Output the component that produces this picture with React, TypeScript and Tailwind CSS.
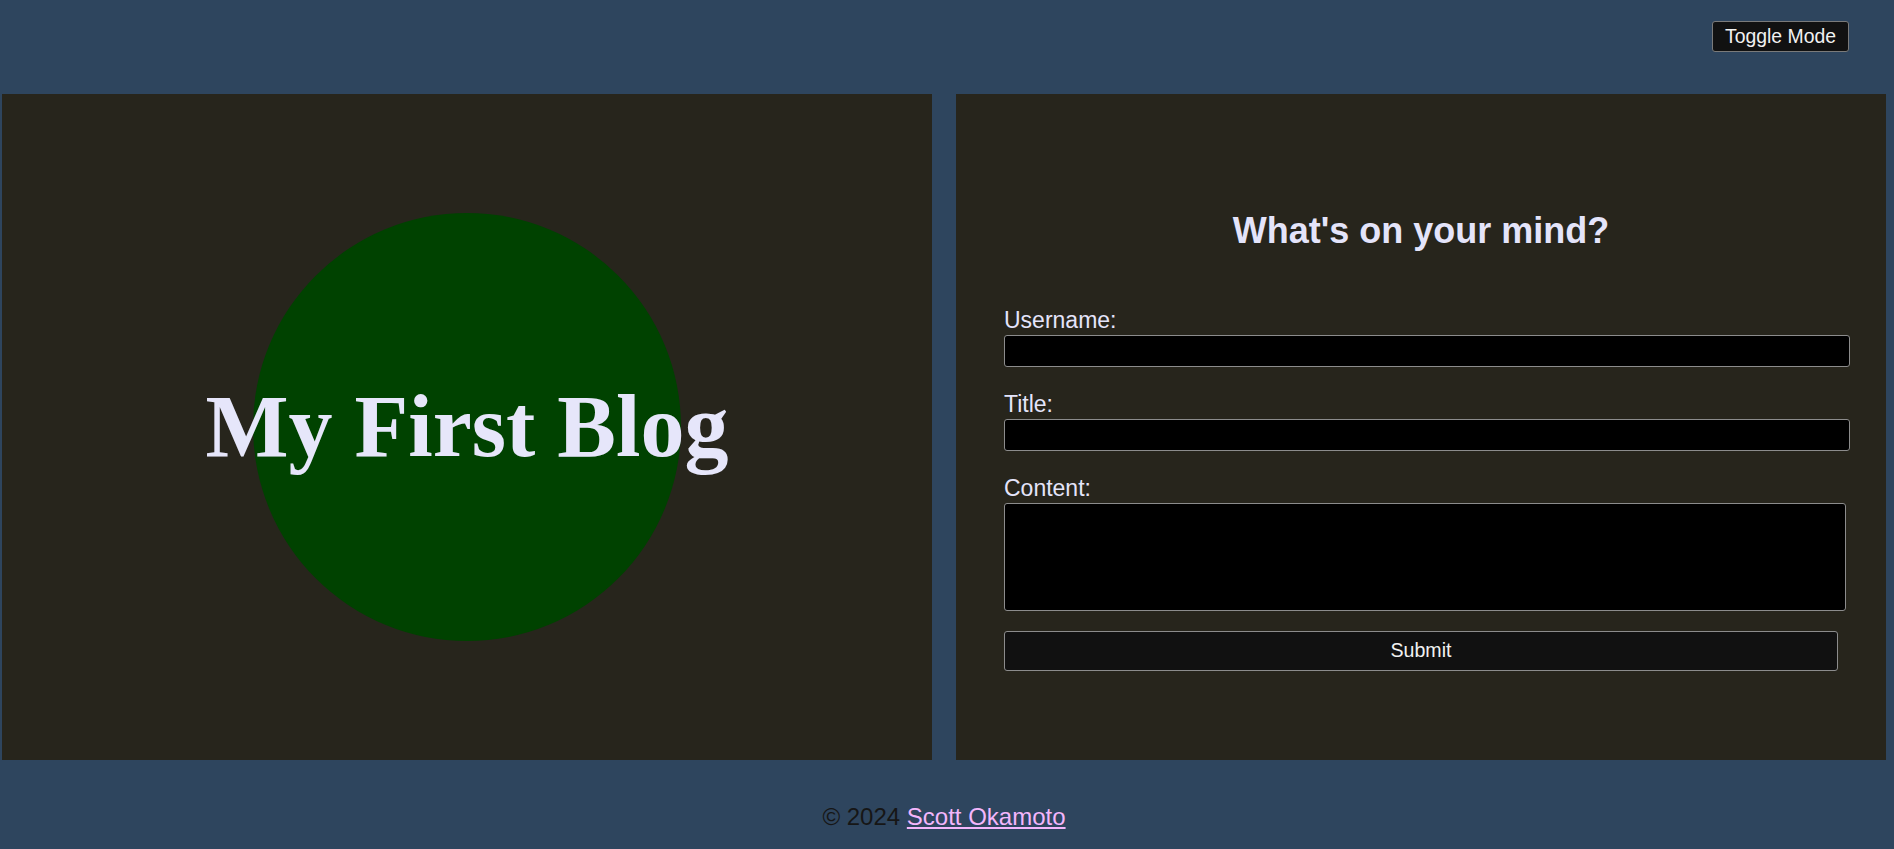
import React from 'react';

const Field: React.FC<{ label: string; multiline?: boolean; first?: boolean }> = ({ label, multiline, first }) => {
  return (
    <div className={first ? 'flex flex-col' : 'flex flex-col mt-[24px]'}>
      <label className="text-[23px] leading-[26px] text-[#e4e4fa]">{label}</label>
      {multiline ? (
        <textarea className="mt-[2px] w-[842px] h-[108px] bg-black border border-[#8c8c8c] rounded-[3px] resize-none" />
      ) : (
        <input type="text" className="mt-[2px] w-[846px] h-[32px] bg-black border border-[#8c8c8c] rounded-[3px]" />
      )}
    </div>
  );
};

export default function App() {
  return (
    <div className="min-h-screen w-full bg-[#2e455e] font-['Liberation_Sans',Arial,sans-serif]">
      <header className="h-[94px] flex justify-end items-start pt-[21px] pr-[45px]">
        <button className="px-[12px] py-[3px] leading-[23px] text-[19.4px] text-[#f2f2f2] bg-[#111111] border border-[#7a7a7a] rounded-[3px]">
          Toggle Mode
        </button>
      </header>

      <main className="flex gap-[24px] pl-[2px] pr-[8px]">
        <section className="w-[930px] shrink-0 h-[666px] bg-[#27251c] flex items-center justify-center">
          <div className="relative w-[428px] h-[428px] rounded-full bg-[#004200] flex items-center justify-center">
            <h1 className="absolute whitespace-nowrap font-['Liberation_Serif','Times_New_Roman',serif] font-bold text-[88px] leading-none text-[#e6e6fa]">
              My First Blog
            </h1>
          </div>
        </section>

        <section className="w-[930px] shrink-0 h-[666px] bg-[#27251c] pt-[116px] pl-[48px]">
          <h2 className="w-[834px] text-center text-[36px] leading-[42px] font-bold text-[#e4e4fa]">
            What's on your mind?
          </h2>
          <form className="mt-[55px] flex flex-col" onSubmit={e => e.preventDefault()}>
            <Field label="Username:" first />
            <Field label="Title:" />
            <Field label="Content:" multiline />
            <button
              type="submit"
              className="mt-[20px] w-[834px] h-[40px] bg-[#111111] border border-[#8c8c8c] rounded-[3px] text-[19.6px] text-[#f2f2f2]"
            >
              Submit
            </button>
          </form>
        </section>
      </main>

      <footer className="pt-[43px] pb-[18px] pl-[2px] pr-[8px] text-center text-[24px] leading-[28px] text-[#161616]">
        © 2024{' '}
        <a href="#" className="underline text-[#f3b6fc]">
          Scott Okamoto
        </a>
      </footer>
    </div>
  );
}
